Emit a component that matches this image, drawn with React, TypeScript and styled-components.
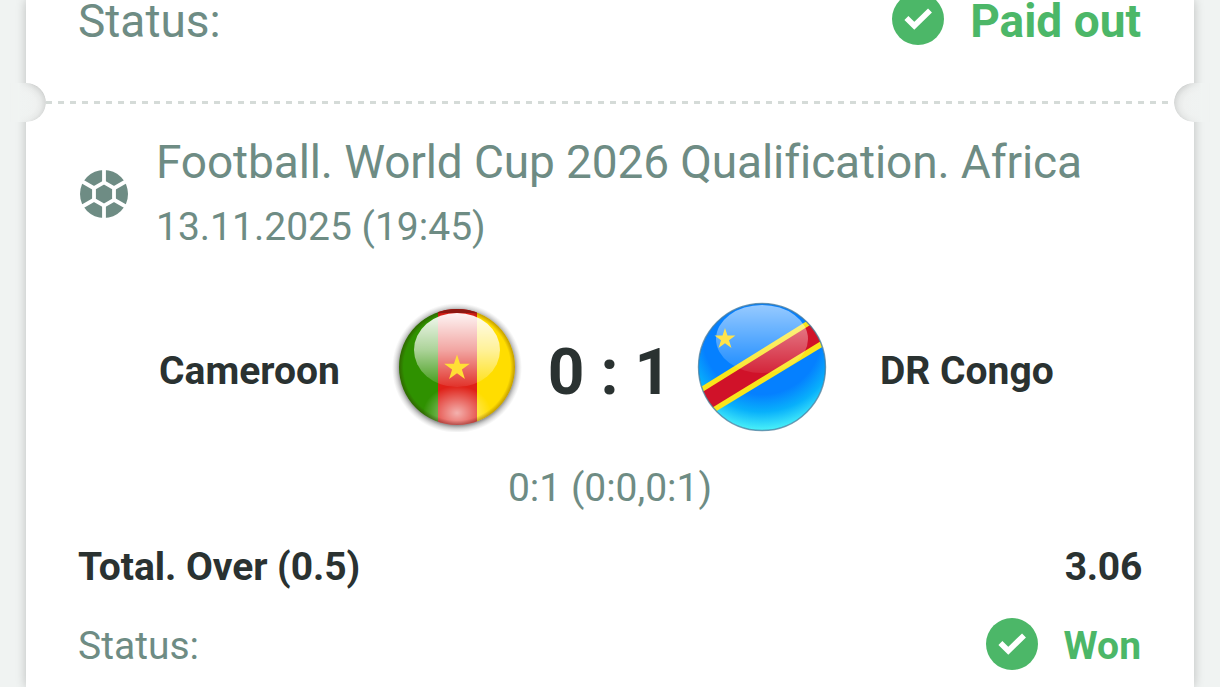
import React from "react";
import styled, { createGlobalStyle } from "styled-components";

const GlobalStyle = createGlobalStyle`
  * { box-sizing: border-box; }
  html, body { margin: 0; padding: 0; }
  body { background: #f0f3f2; overflow: hidden; font-family: Roboto, "Liberation Sans", sans-serif; }
  svg { display: block; flex: none; }
`;

const teal = "#6e8c84";
const dark = "#2a3231";
const green = "#4cb768";

const Page = styled.main`
  height: 687px;
  padding: 0 26px;
  overflow: hidden;
`;

const Card = styled.section`
  height: 687px;
  background: #fff;
  box-shadow: 0 0 10px rgba(0, 0, 0, 0.22);
`;

const Row = styled.div<{ $height: number }>`
  height: ${(p) => p.$height}px;
  padding: 0 52px;
  display: flex;
  align-items: center;
  justify-content: space-between;
`;

const Text = styled.span<{ $size: number; $color?: string; $weight?: number; $spacing?: number; $leading?: number }>`
  font-size: ${(p) => p.$size}px;
  line-height: ${(p) => p.$leading ?? 1.172};
  font-weight: ${(p) => p.$weight ?? 400};
  color: ${(p) => p.$color ?? teal};
  letter-spacing: ${(p) => p.$spacing ?? 0}px;
  white-space: pre;
`;

const Result = styled.div<{ $gap: number }>`
  display: flex;
  align-items: center;
  gap: ${(p) => p.$gap}px;
  padding-right: 1px;

  svg { margin-top: -6px; }
`;

const PayoutRow = styled(Row)`
  padding-top: 1px;
`;

const Perforation = styled.div`
  height: 39px;
  margin: 40px -16px 0;
  display: flex;
  align-items: center;
  justify-content: space-between;
`;

const Notch = styled.i<{ $right?: boolean }>`
  width: 36px;
  height: 39px;
  flex: none;
  border-radius: ${(p) => (p.$right ? "20px 0 0 20px" : "0 20px 20px 0")};
  background:
    linear-gradient(${(p) => (p.$right ? "to left" : "to right")}, #f0f3f2 9px, rgba(240, 243, 242, 0) 24px),
    radial-gradient(
      circle at ${(p) => (p.$right ? "21px" : "15px")} 21px,
      #f0f3f2 0,
      #eff1f0 11px,
      #e8eae9 16px,
      #d9dbda 20px,
      #cbcdcc 22px
    );
  mask-image: linear-gradient(${(p) => (p.$right ? "to left" : "to right")}, transparent 0, #000 9px);
`;

const Dashes = styled.div`
  flex: 1;
  height: 3px;
  background: repeating-linear-gradient(to right, #d5dbd8 0 6px, transparent 6px 12px);
`;

const EventHeader = styled.header`
  height: 134px;
  padding: 14px 0 0 54px;
  display: flex;
  gap: 28px;

  > svg { margin-top: 34px; }
`;

const EventText = styled.div`
  display: flex;
  flex-direction: column;
  gap: 15px;
`;

const Match = styled.div`
  height: 210px;
  padding-top: 36px;
  display: grid;
  grid-template-columns: 366px 130px 175px 130px 1fr;
  grid-template-rows: 150px;
  align-items: center;
`;

const Team = styled.div<{ $away?: boolean }>`
  padding: ${(p) => (p.$away ? "10px 0 0 53px" : "10px 0 0 133px")};
`;

const Score = styled.div`
  padding-top: 11px;
  text-align: center;
`;

const Periods = styled.div`
  height: 63px;
  text-align: center;
`;

const CheckBadge = () => (
  <svg width="52" height="52" viewBox="-26 -26 52 52">
    <circle r="26" fill={green} />
    <path d="M-11.6-1.1-3.7 6.8 12-8.6" fill="none" stroke="#fff" strokeWidth="5.6" />
  </svg>
);

const BallIcon = () => (
  <svg width="48" height="48" viewBox="-24 -24 48 48">
    <circle r="24" fill={teal} />
    <g fill="none" stroke="#fff" strokeWidth="3.8">
      <path d="M0-11.6 10-5.8V5.8L0 11.6-10 5.8V-5.8Z" />
      <path d="M0-11V-25M0 11V25M9.5-5.5 21.7-12.5M9.5 5.5 21.7 12.5M-9.5-5.5-21.7-12.5M-9.5 5.5-21.7 12.5" />
    </g>
  </svg>
);

const star = "M0-1 .225-.309H.951L.363.118.588.809 0 .382-.588.809-.363.118-.951-.309H-.225Z";

const CameroonFlag = () => (
  <svg width="130" height="130" viewBox="-65 -65 130 130">
    <defs>
      <clipPath id="cmClip"><circle r="58" /></clipPath>
      <radialGradient id="cmHalo">
        <stop offset=".86" stopColor="#333" stopOpacity=".7" />
        <stop offset=".93" stopColor="#666" stopOpacity=".3" />
        <stop offset="1" stopColor="#999" stopOpacity="0" />
      </radialGradient>
      <radialGradient id="cmEdge">
        <stop offset=".92" stopColor="#300" stopOpacity="0" />
        <stop offset="1" stopColor="#300" stopOpacity=".3" />
      </radialGradient>
      <linearGradient id="cmGloss" x1="0" y1="0" x2="0" y2="1">
        <stop offset="0" stopColor="#fff" stopOpacity=".95" />
        <stop offset=".5" stopColor="#fff" stopOpacity=".6" />
        <stop offset="1" stopColor="#fff" stopOpacity=".08" />
      </linearGradient>
      <radialGradient id="cmGlow">
        <stop offset="0" stopColor="#fff" stopOpacity=".65" />
        <stop offset="1" stopColor="#fff" stopOpacity="0" />
      </radialGradient>
    </defs>
    <circle r="65" cy="1" fill="url(#cmHalo)" />
    <g clipPath="url(#cmClip)">
      <path fill="#2f9100" d="M-60-60h41V60h-41z" />
      <path fill="#df2118" d="M-19-60h39V60h-39z" />
      <path fill="#ffdd00" d="M20-60h40V60h-40z" />
      <ellipse cy="46" rx="34" ry="27" fill="url(#cmGlow)" />
      <circle r="58" fill="url(#cmEdge)" />
      <path fill="#8d1710" d="M-19-60h39v6h-39z" />
      <ellipse cy="-17" rx="43" ry="37" fill="url(#cmGloss)" />
      <path d={star} transform="translate(0 1) scale(13.5)" fill="#ffdf35" />
    </g>
  </svg>
);

const CongoFlag = () => (
  <svg width="130" height="130" viewBox="-65 -65 130 130">
    <defs>
      <clipPath id="cdClip"><circle r="63.5" /></clipPath>
      <radialGradient id="cdSea" gradientUnits="userSpaceOnUse" cx="0" cy="-32" r="96">
        <stop offset="0" stopColor="#0580ff" />
        <stop offset=".62" stopColor="#0580ff" />
        <stop offset=".8" stopColor="#08b0fb" />
        <stop offset="1" stopColor="#4cf4f8" />
      </radialGradient>
      <linearGradient id="cdGloss" x1="0" y1="0" x2="0" y2="1">
        <stop offset="0" stopColor="#fff" stopOpacity=".58" />
        <stop offset="1" stopColor="#fff" stopOpacity=".08" />
      </linearGradient>
    </defs>
    <g clipPath="url(#cdClip)">
      <circle r="65" fill="url(#cdSea)" />
      <path d="M-66 23 53-51 72-27-52 48Z" fill="#f9e51b" />
      <path d="M-66 29 53-45 72-34-52 42Z" fill="#d01229" />
      <ellipse cy="-28" rx="46" ry="34" fill="url(#cdGloss)" />
      <path d={star} transform="translate(-37 -28) scale(11)" fill="#ffe34b" />
    </g>
    <circle r="63.5" fill="none" stroke="#45799b" strokeOpacity=".75" strokeWidth="1.4" />
  </svg>
);

export default function App() {
  return (
    <>
      <GlobalStyle />
      <Page>
        <Card>
          <PayoutRow $height={43}>
            <Text $size={46} $leading={0.9}>Status:</Text>
            <Result $gap={26}>
              <CheckBadge />
              <Text $size={46} $weight={700} $color={green} $leading={0.9}>Paid out</Text>
            </Result>
          </PayoutRow>
          <Perforation>
            <Notch />
            <Dashes />
            <Notch $right />
          </Perforation>
          <EventHeader>
            <BallIcon />
            <EventText>
              <Text $size={46} $spacing={-0.11}>Football. World Cup 2026 Qualification. Africa</Text>
              <Text $size={39}>13.11.2025 (19:45)</Text>
            </EventText>
          </EventHeader>
          <Match>
            <Team><Text $size={39} $weight={700} $color={dark}>Cameroon</Text></Team>
            <CameroonFlag />
            <Score><Text $size={64} $weight={700} $color={dark}>0 : 1</Text></Score>
            <CongoFlag />
            <Team $away><Text $size={39} $weight={700} $color={dark}>DR Congo</Text></Team>
          </Match>
          <Periods><Text $size={39}>0:1 (0:0,0:1)</Text></Periods>
          <Row $height={78}>
            <Text $size={39} $weight={700} $color={dark} $spacing={-0.05}>Total. Over (0.5)</Text>
            <Text $size={39} $weight={700} $color={dark} $spacing={-0.3}>3.06</Text>
          </Row>
          <Row $height={80}>
            <Text $size={39}>Status:</Text>
            <Result $gap={26}>
              <CheckBadge />
              <Text $size={39} $weight={700} $color={green}>Won</Text>
            </Result>
          </Row>
        </Card>
      </Page>
    </>
  );
}
